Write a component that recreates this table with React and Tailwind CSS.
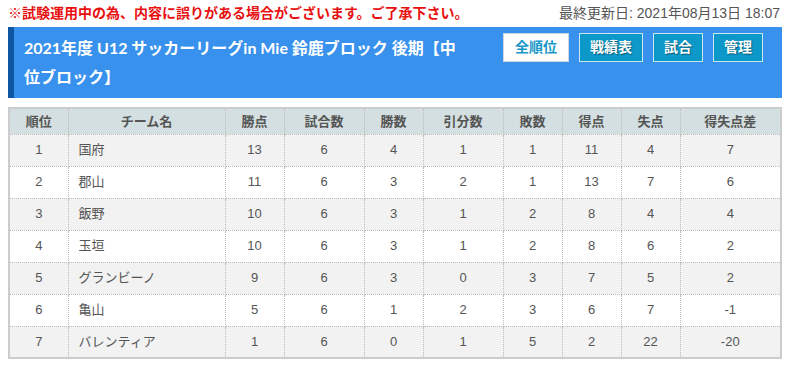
const rows = [
  [1, '国府', 13, 6, 4, 1, 1, 11, 4, 7],
  [2, '郡山', 11, 6, 3, 2, 1, 13, 7, 6],
  [3, '飯野', 10, 6, 3, 1, 2, 8, 4, 4],
  [4, '玉垣', 10, 6, 3, 1, 2, 8, 6, 2],
  [5, 'グランビーノ', 9, 6, 3, 0, 3, 7, 5, 2],
  [6, '亀山', 5, 6, 1, 2, 3, 6, 7, -1],
  [7, 'バレンティア', 1, 6, 0, 1, 5, 2, 22, -20],
]

const heads = ['順位', 'チーム名', '勝点', '試合数', '勝数', '引分数', '敗数', '得点', '失点', '得失点差']
const widths = ['w-[59px]', 'w-[157px]', 'w-[59px]', 'w-[80px]', 'w-[59px]', 'w-[80px]', 'w-[59px]', 'w-[59px]', 'w-[59px]', '']

const font = { fontFamily: '"Liberation Sans", "Noto Sans CJK JP", sans-serif' }

export default function App() {
  return (
    <div className="w-[790px] h-[369px] bg-white overflow-hidden" style={font}>
      {/* notice bar */}
      <div className="flex justify-between items-center px-2 pt-[4px] h-[23px] text-[14px]">
        <span className="text-[#e8100f] font-bold">※試験運用中の為、内容に誤りがある場合がございます。ご了承下さい。</span>
        <span className="text-[#555] mr-[2px]">最終更新日: 2021年08月13日 18:07</span>
      </div>

      {/* title header */}
      <div className="mx-2 mt-[4px] h-[71px] bg-[#3891ec] border-l-[6px] border-[#0f56a0] flex pl-[10px] pr-[19px] pt-[6px]">
        <h1
          className="w-[442px] text-white font-bold text-[16px] leading-[29px]"
          style={{ fontFamily: 'Lato, "Noto Sans CJK JP", sans-serif' }}
        >
          2021年度 U12 サッカーリーグin Mie 鈴鹿ブロック 後期【中位ブロック】
        </h1>
        <div className="ml-auto flex gap-[10px] items-start">
          <button className="h-[29px] w-[66px] bg-white border border-[#cfd8e0] text-[#1896c8] font-bold text-[14px]">全順位</button>
          <button className="h-[29px] w-[64px] bg-[#0c98c8] border border-[#c8e6f3] text-white font-bold text-[14px] [text-shadow:1px_1px_1px_rgba(0,0,0,0.4)]">戦績表</button>
          <button className="h-[29px] w-[50px] bg-[#0c98c8] border border-[#c8e6f3] text-white font-bold text-[14px] [text-shadow:1px_1px_1px_rgba(0,0,0,0.4)]">試合</button>
          <button className="h-[29px] w-[50px] bg-[#0c98c8] border border-[#c8e6f3] text-white font-bold text-[14px] [text-shadow:1px_1px_1px_rgba(0,0,0,0.4)]">管理</button>
        </div>
      </div>

      {/* standings table */}
      <table className="mx-2 mt-[9px] w-[774px] border-collapse border-2 border-[#cccccc] text-[13px] text-[#555] table-fixed">
        <thead>
          <tr className="bg-[#d3dfe0] h-[26px]">
            {heads.map((h, i) => (
              <th key={h} className={`${widths[i]} font-bold text-[#555] border border-dotted border-[#bbb] text-center`}>{h}</th>
            ))}
          </tr>
        </thead>
        <tbody>
          {rows.map((r, ri) => (
            <tr key={r[0]} className={`h-[32px] ${ri % 2 === 0 ? 'bg-[#f2f2f2]' : 'bg-white'}`}>
              {r.map((c, ci) => (
                <td
                  key={ci}
                  className={`border border-dotted border-[#bbb] ${ci === 1 ? 'text-left pl-[10px]' : 'text-center'}`}
                >
                  {c}
                </td>
              ))}
            </tr>
          ))}
        </tbody>
      </table>
    </div>
  )
}
